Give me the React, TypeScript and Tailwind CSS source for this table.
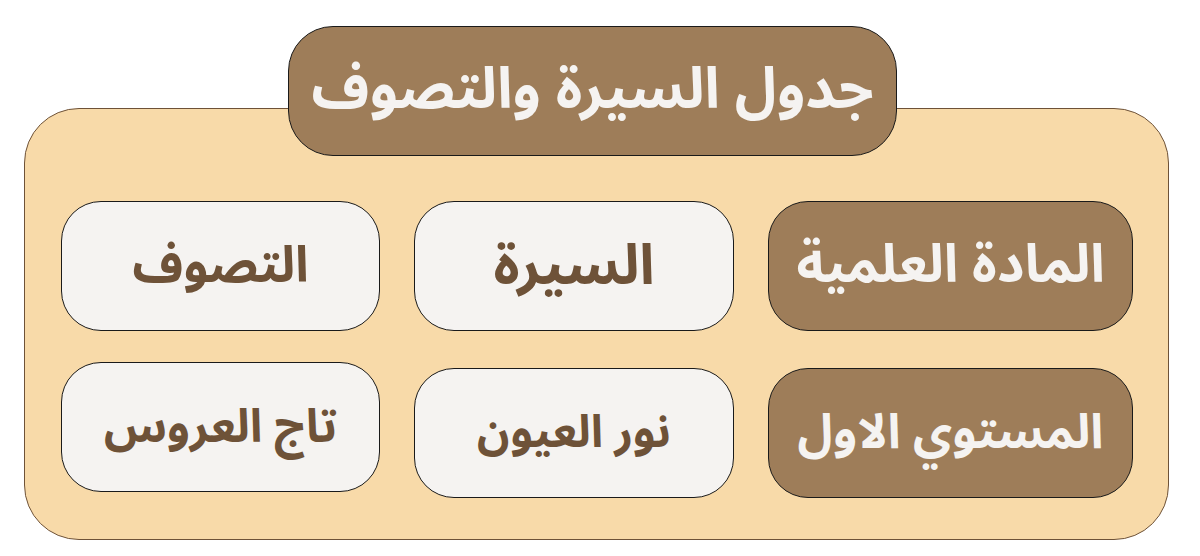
import React from 'react';

const font = { fontFamily: '"Noto Sans Arabic", "Noto Kufi Arabic", "Noto Sans", "DejaVu Sans", sans-serif' };

interface CellProps {
  label: string;
  dark?: boolean;
  size: string;
  className?: string;
}

const Cell = ({ label, dark, size, className = '' }: CellProps) => (
  <div
    className={`h-[130px] rounded-[40px] border border-[#1a1a1a] flex items-center justify-center font-bold ${size} ${
      dark ? 'bg-[#9e7d59] text-[#f5f3f1]' : 'bg-[#f5f3f1] text-[#6e5238]'
    } ${className}`}
  >
    {label}
  </div>
);

export default function App() {
  return (
    <div dir="rtl" className="w-[1200px] h-[556px] bg-white pt-[26px]" style={font}>
      <div className="relative z-10 mr-[303px] w-[609px] h-[130px] rounded-[45px] border border-[#1a1a1a] bg-[#9e7d59] flex items-center justify-center text-[57px] font-bold text-[#f5f3f1]">
        جدول السيرة والتصوف
      </div>
      <div className="mt-[-48px] mr-[31px] w-[1145px] h-[432px] rounded-[55px] border border-[#6e5238] bg-[#f8daa9] pt-[92px] px-[35px]">
        <div className="flex gap-[34px]">
          <Cell label="المادة العلمية" dark size="text-[53px]" className="w-[365px]" />
          <Cell label="السيرة" size="text-[56px]" className="w-[320px]" />
          <Cell label="التصوف" size="text-[50px]" className="w-[319px]" />
        </div>
        <div className="flex gap-[34px] items-start">
          <Cell label="المستوي الاول" dark size="text-[48px]" className="w-[365px] mt-[37px]" />
          <Cell label="نور العيون" size="text-[45px]" className="w-[320px] mt-[37px]" />
          <Cell label="تاج العروس" size="text-[46px]" className="w-[319px] mt-[31px]" />
        </div>
      </div>
    </div>
  );
}
